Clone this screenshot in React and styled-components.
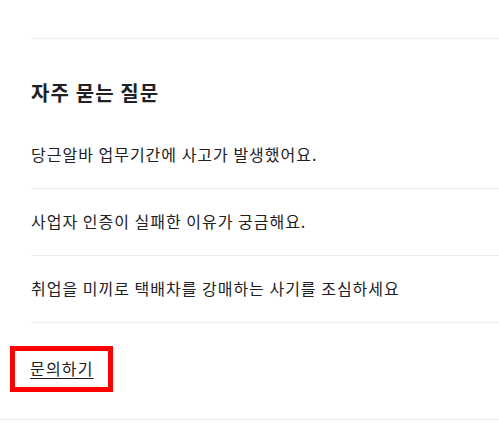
import React from "react";
import styled, { createGlobalStyle } from "styled-components";

const GlobalStyle = createGlobalStyle`
  html, body {
    margin: 0;
    padding: 0;
    background: #ffffff;
  }
  body {
    font-family: "Noto Sans CJK KR", "Noto Sans", sans-serif;
    color: #212124;
  }
`;

const Page = styled.div`
  width: 100%;
  overflow: hidden;
`;

const FaqSection = styled.section`
  padding-left: 31px;
  padding-top: 38px;
`;

const TopRule = styled.div`
  border-top: 1px solid #ececec;
`;

const Heading = styled.h2`
  margin: 39px 0 14px;
  font-size: 20px;
  line-height: 30px;
  font-weight: 700;
  letter-spacing: 1.1px;
  color: #212124;
`;

const QuestionList = styled.ul`
  list-style: none;
  margin: 0;
  padding: 0;
`;

const QuestionItem = styled.li`
  padding: 20px 0 22px;
  font-size: 16px;
  line-height: 24px;
  letter-spacing: 1px;
  color: #212124;
  border-bottom: 1px solid #ececec;
  white-space: nowrap;
`;

const InquiryBar = styled.div`
  padding: 28px 15px 32px;
  border-bottom: 1px solid #ececec;
`;

const InquiryLink = styled.a`
  display: inline-block;
  padding: 5px 14px 7px 15px;
  font-size: 16px;
  line-height: 24px;
  letter-spacing: 1.2px;
  color: #212124;
  text-decoration: underline;
  text-underline-offset: 3px;
  outline: 5px solid #ff0000;
`;

const questions = [
  "당근알바 업무기간에 사고가 발생했어요.",
  "사업자 인증이 실패한 이유가 궁금해요.",
  "취업을 미끼로 택배차를 강매하는 사기를 조심하세요",
];

export default function App() {
  return (
    <Page>
      <GlobalStyle />
      <FaqSection>
        <TopRule />
        <Heading>자주 묻는 질문</Heading>
        <QuestionList>
          {questions.map((q) => (
            <QuestionItem key={q}>{q}</QuestionItem>
          ))}
        </QuestionList>
      </FaqSection>
      <InquiryBar>
        <InquiryLink href="#">문의하기</InquiryLink>
      </InquiryBar>
    </Page>
  );
}
